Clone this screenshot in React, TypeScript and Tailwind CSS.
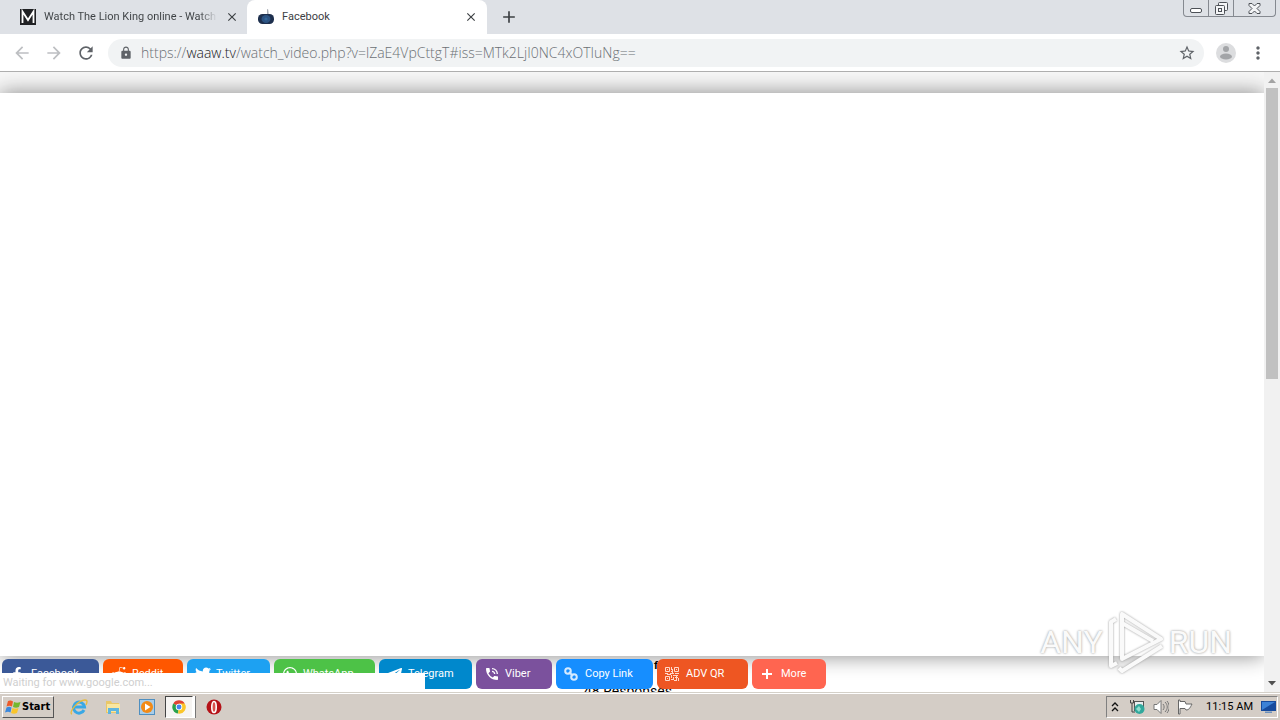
import type { ReactNode } from "react";
import { FaFacebookF, FaRedditAlien, FaTwitter, FaWhatsapp, FaTelegramPlane } from "react-icons/fa";
import {
  MdAdd,
  MdArrowBack,
  MdArrowForward,
  MdClose,
  MdLock,
  MdMoreVert,
  MdPhoneInTalk,
  MdRefresh,
  MdStarBorder,
} from "react-icons/md";

function BirdIcon() {
  return (
    <svg viewBox="0 0 16 16" className="size-4 shrink-0" aria-hidden="true">
      <path d="M9 0l1.200.5.6 5.500H9z" fill="#a9adb5" />
      <rect x="0" y="5" width="16" height="10" rx="4.500" fill="#1d2f4d" />
      <ellipse cx="8" cy="10" rx="4.500" ry="4" fill="#2c5382" />
      <circle cx="8" cy="10" r="1.600" fill="#336698" />
    </svg>
  );
}

function WindowControls() {
  return (
    <div className="mr-1 flex h-[17px] shrink-0 self-start rounded-b border border-t-0 border-[#858990] text-[#4d5157]">
      <button aria-label="Minimize" className="flex w-[25px] items-end justify-center border-r border-[#858990] pb-[3px]">
        <span className="h-[5px] w-3 rounded-[2px] border border-[#4d5157] bg-white" />
      </button>
      <button aria-label="Restore" className="flex w-[25px] items-center justify-center border-r border-[#858990]">
        <svg viewBox="0 0 13 13" className="size-[13px]" fill="#f4f5f7" stroke="currentColor">
          <rect x="3.500" y=".5" width="9" height="8" rx="1" />
          <rect x=".5" y="3.500" width="9" height="9" rx="1" />
          <rect x="3.500" y="6.500" width="3" height="3" />
        </svg>
      </button>
      <button aria-label="Close window" className="flex w-[41px] items-center justify-center">
        <svg viewBox="0 0 13 11" className="h-[11px] w-[13px]" fill="#f4f5f7" stroke="currentColor">
          <path d="M1 .5h3l2.500 2.500L9 .5h3v2L9 5.500l3 3v2H9L6.500 8 4 10.500H1v-2l3-3-3-3z" />
        </svg>
      </button>
    </div>
  );
}

function TabStrip() {
  return (
    <div className="flex h-[34px] shrink-0 bg-[#dee1e6] text-[11px] text-[#3c4043]">
      <div className="flex w-[247px] items-center gap-2 pr-2 pl-5">
        <svg viewBox="0 0 16 16" className="size-4 shrink-0" aria-hidden="true">
          <rect width="16" height="16" fill="#202124" />
          <path d="M2.500 14V2.500L8 11l5.500-8.500V14" fill="none" stroke="#fff" strokeWidth="1.800" />
        </svg>
        <span className="flex-1 overflow-hidden bg-linear-to-r from-[#3c4043] from-90% to-transparent bg-clip-text whitespace-nowrap text-transparent">
          Watch The Lion King online - Watch M
        </span>
        <button aria-label="Close tab" className="shrink-0">
          <MdClose className="size-[14px]" />
        </button>
      </div>
      <div className="flex w-60 items-center gap-2 rounded-t-lg bg-white pr-[9px] pl-[11px]">
        <BirdIcon />
        <span className="flex-1">Facebook</span>
        <button aria-label="Close tab">
          <MdClose className="size-[14px]" />
        </button>
      </div>
      <button aria-label="New tab" className="ml-3 flex items-center">
        <MdAdd className="size-5" />
      </button>
      <div className="flex-1" />
      <WindowControls />
    </div>
  );
}

function Toolbar() {
  return (
    <div className="flex h-[38px] shrink-0 items-center border-b border-[#aeaeae] bg-white px-3 text-[#5f6368]">
      <button aria-label="Back" className="mr-3 text-[#bdbfc2]"><MdArrowBack className="size-5" /></button>
      <button aria-label="Forward" className="mr-3 text-[#bdbfc2]"><MdArrowForward className="size-5" /></button>
      <button aria-label="Reload" className="mr-3"><MdRefresh className="size-5" /></button>
      <div className="flex h-7 flex-1 items-center rounded-full bg-[#f1f3f4] pr-2 pl-[11px]">
        <MdLock className="mr-2 size-[14px]" />
        <a
          href="#address"
          className="flex-1 font-['Open_Sans','Noto_Sans',sans-serif] text-[14px] leading-5 font-light whitespace-nowrap text-[#6b7075]"
        >
          https://<span className="text-[#202124]">waaw.tv</span>
          /watch_video.php?v=lZaE4VpCttgT#iss=MTk2LjI0NC4xOTIuNg==
        </a>
        <button aria-label="Bookmark this page"><MdStarBorder className="size-[18px]" /></button>
      </div>
      <button aria-label="Profile" className="mr-3 ml-3">
        <svg viewBox="0 0 20 20" className="size-5">
          <circle cx="10" cy="10" r="10" fill="#dcdddf" />
          <circle cx="10" cy="6" r="3" fill="#a3a5a8" />
          <ellipse cx="10" cy="13.500" rx="6" ry="3" fill="#a3a5a8" />
        </svg>
      </button>
      <button aria-label="Menu"><MdMoreVert className="size-5" /></button>
    </div>
  );
}

function ChainIcon() {
  return (
    <svg viewBox="0 0 14 14" className="size-[14px]" fill="none" stroke="#d5eaff" strokeWidth="2">
      <circle cx="4" cy="4" r="2.800" />
      <circle cx="10" cy="10" r="2.800" />
      <path d="M5 5l4 4" />
    </svg>
  );
}

function CodeIcon() {
  return (
    <svg viewBox="0 0 14 14" className="size-[14px]" fill="none" stroke="#ffd9cb">
      <path d="M.5.500h4v4h-4zM9.500.500h4v4h-4zM.5 9.500h4v4h-4z" />
      <path d="M2 2.500h1M11 2.500h1M2 11.500h1M6.500 0v3M6 4.500h2M7.500 2v4M0 6.500h3M2 7.500h4M5 6.500h4M8 8.500h5M10 6.500h4M6.500 8v3M6 12.500h3M8.500 10v2M10 10.500h3M11.500 9v4M13.500 11v3M9 13.500h3" />
    </svg>
  );
}

function PlusIcon() {
  return (
    <svg viewBox="0 0 14 14" className="size-[14px]" stroke="currentColor" strokeWidth="2">
      <path d="M7 2v10M2 7h10" />
    </svg>
  );
}

type Share = { label: string; style: string; icon: ReactNode };

const shares: Share[] = [
  { label: "Facebook", style: "w-[97px] bg-[#3b5998]", icon: <FaFacebookF className="size-[14px]" /> },
  { label: "Reddit", style: "w-20 bg-[#ff5700]", icon: <FaRedditAlien className="size-4" /> },
  { label: "Twitter", style: "w-[83px] bg-[#1da1f2]", icon: <FaTwitter className="size-4" /> },
  { label: "WhatsApp", style: "w-[101px] bg-[#4dc247]", icon: <FaWhatsapp className="size-4" /> },
  { label: "Telegram", style: "w-[93px] bg-[#0088cc]", icon: <FaTelegramPlane className="size-4" /> },
  { label: "Viber", style: "w-[76px] bg-[#7b519d]", icon: <MdPhoneInTalk className="size-4" /> },
  { label: "Copy Link", style: "w-[97px] bg-[#168eff]", icon: <ChainIcon /> },
  { label: "ADV QR", style: "w-[91px] bg-[#ee5622]", icon: <CodeIcon /> },
  { label: "More", style: "w-[74px] bg-[#ff6550]", icon: <PlusIcon /> },
];

function Watermark() {
  return (
    <div className="pointer-events-none absolute right-12 bottom-[18px] z-10 flex items-center gap-1 font-['Roboto',sans-serif] text-[32px] leading-none text-[#fafafa] [text-shadow:0_0_2px_#aaa,0_0_3px_#ccc]">
      <span>ANY</span>
      <svg
        viewBox="0 0 58 64"
        className="h-16 w-[58px] drop-shadow-[0_0_1px_#999]"
        fill="none"
        stroke="#fafafa"
        strokeWidth="4"
        strokeLinejoin="round"
      >
        <path d="M15 4v45L54 29 15 4zM9 9L4 12v44l6-3M15 13l31 18M12 58l3 3 40-25" />
      </svg>
      <span>RUN</span>
    </div>
  );
}

function WebPage() {
  return (
    <main className="relative flex min-h-0 flex-1 overflow-hidden">
      <div className="flex min-w-0 flex-1 flex-col overflow-hidden bg-white">
        <div className="h-[21px] shrink-0 bg-[#f7f7f7]" />
        <section className="relative flex-1 bg-white shadow-[0_0_20px_#888]" aria-label="Video" />
        <footer className="relative h-9 shrink-0">
          <p className="absolute top-1 left-[654px] text-[11px] leading-3 font-bold text-black">f</p>
          <p className="absolute top-[26px] left-[584px] text-[14px] leading-[18px] whitespace-nowrap text-black">48 Responses</p>
          <div className="relative flex gap-1 px-[2px] pt-[3px]">
            {shares.map((share) => (
              <button
                key={share.label}
                className={`flex h-[30px] items-center rounded-md pl-2 text-[11px] text-white ${share.style}`}
              >
                <span className="flex w-[21px] shrink-0">{share.icon}</span>
                {share.label}
              </button>
            ))}
          </div>
          <p className="absolute bottom-0 left-0 h-[19px] w-[425px] bg-white pl-[3px] text-[11px] leading-5 text-[#cfcfcf]">
            Waiting for www.google.com...
          </p>
        </footer>
      </div>
      <div className="flex w-4 shrink-0 flex-col items-center bg-[#f1f1f1]">
        <svg viewBox="0 0 16 16" className="size-4 shrink-0"><path d="M4 11h8L8 6.500z" fill="#a3a3a3" /></svg>
        <div className="h-[47%] w-3 bg-[#c1c1c1]" />
        <div className="flex-1" />
        <svg viewBox="0 0 16 16" className="size-4 shrink-0"><path d="M4 5h8L8 9.500z" fill="#505050" /></svg>
      </div>
      <Watermark />
    </main>
  );
}

function Taskbar() {
  return (
    <div className="flex h-7 shrink-0 items-center border-t border-[#d4d0c8] bg-[#d4cdc6] px-[2px] pt-px text-[11px] text-black shadow-[inset_0_1px_0_#fff]">
      <button className="mr-2 flex h-[22px] w-[52px] items-center gap-px border border-t-white border-r-[#555] border-b-[#555] border-l-white pl-[2px] font-['DejaVu_Sans_Condensed','DejaVu_Sans',sans-serif] font-bold">
        <svg viewBox="0 0 16 16" className="size-4 shrink-0">
          <path d="M3 2c2-1 3-.5 5 .5L7 7.500C5 6.500 4 6.500 1.500 7.500z" fill="#ec5a2a" />
          <path d="M9 3c2 1 4 1 6.500 0L14 8c-2 1-4 1-6 0z" fill="#74b72f" />
          <path d="M1.500 8.500c2-1 3-1 5 0L5.500 13.500c-2-1-3-1-5.500 0z" fill="#3a88dd" />
          <path d="M7.500 9c2 1 4 1 6 0l-1.500 5c-2 1-4 1-6 0z" fill="#f9c52c" />
        </svg>
        Start
      </button>
      <div className="flex items-center">
        <button aria-label="Internet Explorer" className="flex w-[34px] justify-center">
          <svg viewBox="0 0 18 16" className="h-4 w-[18px]" fill="none">
            <path d="M14 11a5.500 5.500 0 1 1 .5-3H5" stroke="#39a8e5" strokeWidth="3" />
            <path d="M2 15C-2 14 8 1 15 1c3 0 2 3 1 5" stroke="#e8ba3b" strokeWidth="1.300" />
          </svg>
        </button>
        <button aria-label="Windows Explorer" className="flex w-[34px] justify-center">
          <svg viewBox="0 0 16 16" className="size-4">
            <path d="M1 2h5l1 2h7v10H1z" fill="#e9c768" />
            <path d="M2 5h13v8H2z" fill="#f8e6a0" />
            <path d="M3 9h11v6h-3v-3H6v3H3z" fill="#5fb5df" />
          </svg>
        </button>
        <button aria-label="Media Player" className="flex w-[34px] justify-center">
          <svg viewBox="0 0 16 16" className="size-4">
            <rect x=".5" y=".5" width="15" height="15" fill="#a9cde8" stroke="#4f8fc0" />
            <circle cx="8" cy="8" r="6" fill="#f28a16" />
            <path d="M6 4.500L11.500 8 6 11.500z" fill="#fff" />
          </svg>
        </button>
        <button aria-label="Chrome" className="ml-px flex h-[22px] w-[28px] items-center justify-center border border-t-[#444] border-r-white border-b-white border-l-[#444] bg-[#f6f4f2]">
          <svg viewBox="0 0 16 16" className="size-[14px]">
            <path d="M8 8L1.500 4a7.500 7.500 0 0 1 13 0z" fill="#e04434" />
            <path d="M8 8L1.500 4A7.500 7.500 0 0 0 7 15.500z" fill="#2ba24c" />
            <path d="M8 8h-.5L7 15.500A7.500 7.500 0 0 0 14.500 4H8z" fill="#fbc62a" />
            <circle cx="8" cy="8" r="3.700" fill="#fff" />
            <circle cx="8" cy="8" r="2.800" fill="#4584ef" />
          </svg>
        </button>
        <span className="h-[22px] w-[3px] border-r border-[#777] bg-white" />
        <button aria-label="Opera" className="flex w-9 justify-center">
          <svg viewBox="0 0 16 16" className="size-4">
            <circle cx="8" cy="8" r="7.500" fill="#b51218" />
            <ellipse cx="8" cy="8" rx="2.200" ry="5.500" fill="#d9514c" stroke="#fff" strokeWidth="1.600" />
          </svg>
        </button>
      </div>
      <div className="flex-1" />
      <div className="flex h-[22px] items-center border border-t-[#808080] border-r-white border-b-white border-l-[#808080] pr-px pl-1">
        <button aria-label="Show hidden icons" className="mr-[10px]">
          <svg viewBox="0 0 8 10" className="h-[10px] w-2" fill="none" stroke="#111" strokeWidth="1.300">
            <path d="M1 4l3-3 3 3M1 9l3-3 3 3" />
          </svg>
        </button>
        <svg viewBox="0 0 16 16" className="mr-2 size-4">
          <path d="M1.500 1v3h3V1M3 4v9h3" fill="none" stroke="#444" />
          <rect x="5.500" y="2.500" width="9" height="9" fill="#e8eef0" stroke="#555" />
          <circle cx="10.500" cy="10" r="5" fill="#32a89c" />
          <path d="M7 10l3-3 2 3-2 3z" fill="#91ddce" />
        </svg>
        <svg viewBox="0 0 16 16" className="mr-2 size-4" stroke="#777" fill="none">
          <path d="M1 5.500h3l4-4v13l-4-4H1z" fill="#fff" />
          <path d="M10 5c1.500 2 1.500 4 0 6M12 3c3 3 3 7 0 10M14 2c3 4 3 8 0 12" />
        </svg>
        <svg viewBox="0 0 16 16" className="mr-[13px] size-4" fill="#fff" stroke="#666">
          <path d="M1.500 1v14h1.500V9.500h5l1 1.500c3 0 4-2 6-6H9L8 2.500H3V1z" />
        </svg>
        <time>11:15 AM</time>
        <svg viewBox="0 0 15 12" className="ml-2 h-3 w-[15px]">
          <rect width="15" height="10" fill="#174b9d" />
          <path d="M1 1h13L1 9z" fill="#3d82d6" />
          <path d="M4 10.500h7V12H4z" fill="#6d91bd" />
        </svg>
      </div>
    </div>
  );
}

export default function App() {
  return (
    <div className="flex h-screen flex-col overflow-hidden bg-white font-['Roboto','Noto_Sans',sans-serif]">
      <TabStrip />
      <Toolbar />
      <WebPage />
      <Taskbar />
    </div>
  );
}
